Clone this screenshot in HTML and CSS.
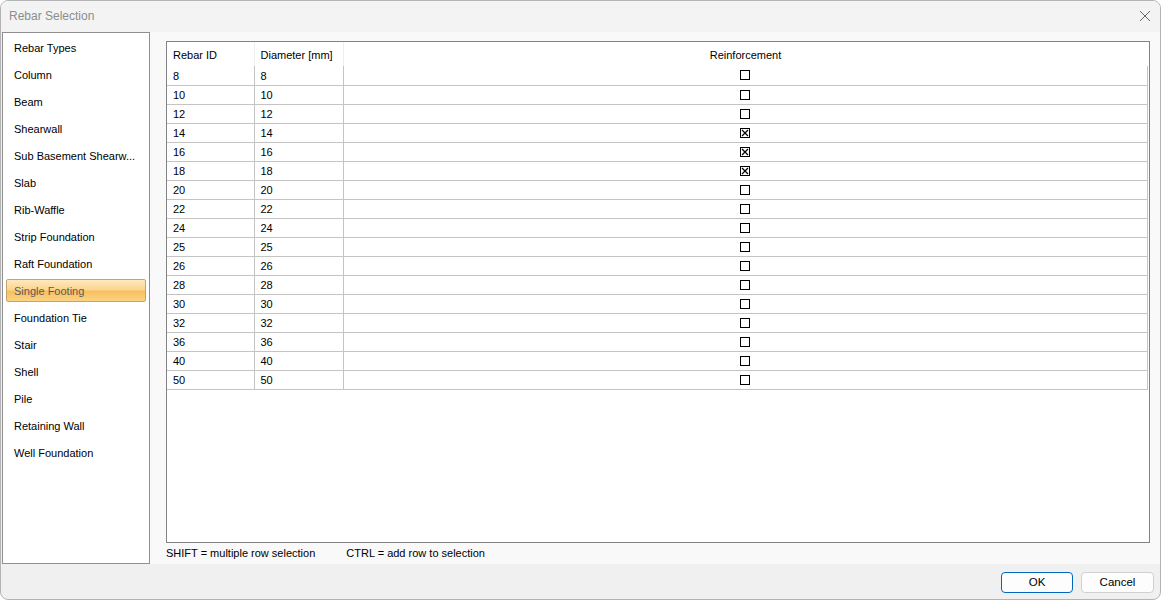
FILE: index.html
```html
<!DOCTYPE html>
<html lang="en">
<head>
    <meta charset="UTF-8">
    <title>Rebar Selection</title>
    <link rel="stylesheet" href="styles.css">
</head>
<body>
    <div class="window">
        <div class="titlebar">
            <span class="title">Rebar Selection</span>
            <svg class="close" width="12" height="12" viewBox="0 0 12 12"><path d="M1 1 L11 11 M11 1 L1 11" stroke="#666" stroke-width="1" fill="none"/></svg>
        </div>
        <div class="main">
            <ul class="types">
                <li>Rebar Types</li>
                <li>Column</li>
                <li>Beam</li>
                <li>Shearwall</li>
                <li>Sub Basement Shearw...</li>
                <li>Slab</li>
                <li>Rib-Waffle</li>
                <li>Strip Foundation</li>
                <li>Raft Foundation</li>
                <li class="selected">Single Footing</li>
                <li>Foundation Tie</li>
                <li>Stair</li>
                <li>Shell</li>
                <li>Pile</li>
                <li>Retaining Wall</li>
                <li>Well Foundation</li>
            </ul>
            <div class="content">
                <div class="grid">
                    <table>
                        <thead>
                            <tr><th class="c1">Rebar ID</th><th class="c2">Diameter [mm]</th><th class="c3">Reinforcement</th></tr>
                        </thead>
                        <tbody id="rows"></tbody>
                    </table>
                </div>
                <div class="hints">
                    <span>SHIFT = multiple row selection</span>
                    <span>CTRL = add row to selection</span>
                </div>
            </div>
        </div>
        <div class="buttons">
            <button class="ok">OK</button>
            <button>Cancel</button>
        </div>
    </div>

    <script>
        const sizes = [8, 10, 12, 14, 16, 18, 20, 22, 24, 25, 26, 28, 30, 32, 36, 40, 50];
        const checked = [14, 16, 18];
        const box = '<svg width="10" height="10" viewBox="0 0 10 10"><rect x="0.5" y="0.5" width="9" height="9" fill="#fff" stroke="#000"/></svg>';
        const boxX = '<svg width="10" height="10" viewBox="0 0 10 10"><rect x="0.5" y="0.5" width="9" height="9" fill="#fff" stroke="#000"/><path d="M2 2 L8 8 M8 2 L2 8" stroke="#000" stroke-width="1.3"/></svg>';
        let html = '';
        sizes.forEach(function (s) {
            html += '<tr><td>' + s + '</td><td>' + s + '</td><td class="chk">' + (checked.includes(s) ? boxX : box) + '</td></tr>';
        });
        document.getElementById('rows').innerHTML = html;
    </script>
</body>
</html>
```

FILE: styles.css
```css
* { box-sizing: border-box; }
body { margin: 0; font-family: "Liberation Sans", Arial, sans-serif; font-size: 11px; color: #000; background: #fff; }
.window { width: 1161px; height: 600px; border: 1px solid #b4b4b4; border-radius: 8px; background: #f0f0f0; overflow: hidden; display: flex; flex-direction: column; }
.titlebar { height: 31px; background: #f3f3f3; display: flex; align-items: center; justify-content: space-between; padding: 0 9px 1px 8px; flex-shrink: 0; }
.title { font-size: 12px; color: #8c8c8c; }
.close { display: block; }
.main { display: flex; height: 532px; flex-shrink: 0; }
.types { list-style: none; margin: 0 0 0 1px; padding: 3px 0; width: 148px; background: #fff; border: 1px solid #8f8f8f; display: flex; flex-direction: column; gap: 4px; }
.types li { height: 23px; margin: 0 3px; padding: 0 8px 0 7px; line-height: 22px; white-space: nowrap; overflow: hidden; border: 1px solid transparent; border-radius: 2px; flex-shrink: 0; }
.types li.selected { border-color: #c9a26a; color: #5a5a5a; background: linear-gradient(#fde9bd 0%, #fbd68f 45%, #f9c05d 55%, #fbd385 100%); }
.content { flex: 1; background: #f9f9f9; padding: 9px 9px 0 16px; display: flex; flex-direction: column; }
.grid { height: 503px; background: #fff; border: 1px solid #838383; width: 984px; }
table { border-collapse: collapse; width: 981px; table-layout: fixed; }
th { height: 24px; font-weight: normal; text-align: left; padding: 2px 0 0 6px; border-right: 1px solid #eeeeee; }
th.c1 { width: 87px; }
th.c2 { width: 89px; }
th.c3 { text-align: center; padding: 2px 0 0 0; border-right: none; }
td { height: 19px; padding: 1px 0 0 6px; border-right: 1px solid #c4c4c4; border-bottom: 1px solid #c4c4c4; line-height: 16px; }
td.chk { text-align: center; padding: 0; }
td.chk svg { display: block; margin: 0 auto; }
.hints { display: flex; gap: 31px; padding: 4px 0 0 0; height: 21px; }
.buttons { flex: 1; display: flex; justify-content: flex-end; align-items: center; gap: 8px; padding: 1px 6px 0 0; }
button { width: 73px; height: 21px; font-family: inherit; font-size: 11.5px; background: #fdfdfd; border: 1px solid #d0d0d0; border-radius: 4px; padding: 0; }
button.ok { width: 72px; border-color: #0067c0; }
```
